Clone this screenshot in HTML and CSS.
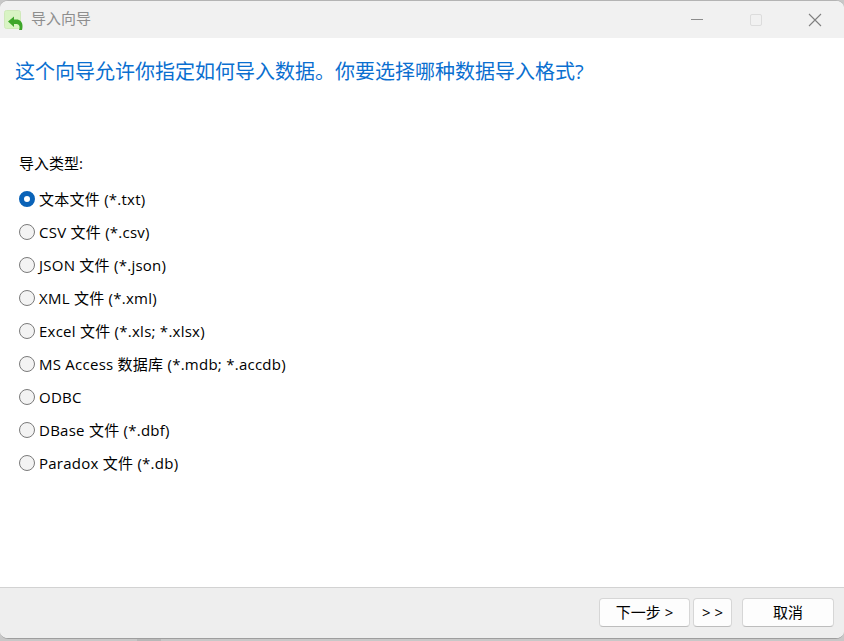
FILE: index.html
```html
<!DOCTYPE html>
<html lang="zh-CN">
<head>
<meta charset="utf-8">
<title>导入向导</title>
<link rel="stylesheet" href="styles.css">
</head>
<body>
<div class="window">
  <header class="titlebar">
    <svg class="app-icon" width="21" height="21" viewBox="0 0 21 21">
      <rect x="0.5" y="0.5" width="16" height="18" rx="2" fill="#d9f4c4" stroke="#cfe9ba"/>
      <path d="M4 11.500 10 6.500v3h2.500c3.500 0 6 2.500 6 6.500 0 1.800-.2 3-.5 4h-3c.6-1.300.7-2.500.5-3.500-.3-1.600-1.300-2.500-3-2.500H10v3z" fill="#3ea62a"/>
    </svg>
    <span class="title">导入向导</span>
    <div class="controls">
      <svg class="ctl" width="46" height="38" viewBox="0 0 46 38"><path d="M17 18.500h12" stroke="#8c8c8c" fill="none"/></svg>
      <svg class="ctl ctl-max" width="46" height="38" viewBox="0 0 46 38"><rect x="17.500" y="13.500" width="11" height="11" rx="1.500" fill="none" stroke="#dcdcdc"/></svg>
      <svg class="ctl" width="46" height="38" viewBox="0 0 46 38"><path d="M17 13l12 12M29 13 17 25" stroke="#808080" stroke-width="1.100" fill="none"/></svg>
    </div>
  </header>
  <main class="content">
    <h1 class="heading">这个向导允许你指定如何导入数据。你要选择哪种数据导入格式?</h1>
    <div class="group-label">导入类型:</div>
    <ul class="options">
      <li class="option"><span class="radio checked"></span>文本文件 (*.txt)</li>
      <li class="option"><span class="radio"></span>CSV 文件 (*.csv)</li>
      <li class="option"><span class="radio"></span>JSON 文件 (*.json)</li>
      <li class="option"><span class="radio"></span>XML 文件 (*.xml)</li>
      <li class="option"><span class="radio"></span>Excel 文件 (*.xls; *.xlsx)</li>
      <li class="option"><span class="radio"></span>MS Access 数据库 (*.mdb; *.accdb)</li>
      <li class="option"><span class="radio"></span>ODBC</li>
      <li class="option"><span class="radio"></span>DBase 文件 (*.dbf)</li>
      <li class="option"><span class="radio"></span>Paradox 文件 (*.db)</li>
    </ul>
  </main>
  <footer class="footer">
    <button class="btn btn-next">下一步 &gt;</button>
    <button class="btn btn-skip">&gt; &gt;</button>
    <button class="btn btn-cancel">取消</button>
  </footer>
</div>
</body>
</html>
```
FILE: styles.css
```css
* { box-sizing: border-box; }
html, body { margin: 0; height: 100%; }
body {
  background: linear-gradient(#b8b8b8, #b8b8b8) 137px 639px / 24px 2px no-repeat, #c8c8c8;
  font-family: "Open Sans", "Noto Sans CJK SC", sans-serif;
  font-size: 15px;
  letter-spacing: 0.25px;
  color: #000;
  overflow: hidden;
}
.window {
  height: 639px;
  display: flex;
  flex-direction: column;
  background: #fff;
  border-top: 1px solid #b4b4b4;
  border-radius: 8px;
  border-bottom: 1px solid #9e9e9e;
  overflow: hidden;
}
.titlebar {
  height: 37px;
  flex: none;
  display: flex;
  align-items: center;
  background: #f1f1f1;
  padding-left: 4px;
}
.app-icon { margin-top: 1px; flex: none; }
.title { margin: -5px 0 0 6px; font-size: 15px; letter-spacing: 0; color: #8e8e8e; }
.controls { margin-left: auto; display: flex; align-items: center; margin-right: 6px; }
.ctl { display: block; margin-left: 13px; }
.content { flex: 1; padding: 0 15px; }
.heading {
  margin: 17px 0 0;
  font-size: 20px;
  line-height: 33px;
  letter-spacing: 0;
  font-weight: 400;
  color: #0a6fd0;
}
.group-label { margin: 65px 0 0 4px; line-height: 20px; letter-spacing: 0; }
.options { list-style: none; margin: 9px 0 0 4px; padding: 0; }
.option { height: 33px; display: flex; align-items: center; gap: 4px; }
.radio {
  width: 16px;
  height: 16px;
  flex: none;
  border-radius: 50%;
  border: 1px solid #7a7a7a;
  background: #f3f3f3;
}
.radio.checked { border: 5px solid #0a63b8; background: #fff; }
.footer {
  height: 51px;
  flex: none;
  display: flex;
  align-items: flex-start;
  background: #eeeeee;
  border-top: 1px solid #d2d2d2;
  padding: 10px 10px 0 0;
  justify-content: flex-end;
}
.btn {
  height: 29px;
  font: inherit;
  letter-spacing: 0;
  color: #000;
  background: #fdfdfd;
  border: 1px solid #d6d6d6;
  border-bottom-color: #bdbdbd;
  border-radius: 4px;
  padding: 0 0 2px;
}
.btn-next { width: 91px; }
.btn-skip { width: 39px; margin-left: 3px; }
.btn-cancel { width: 92px; margin-left: 10px; }
```
